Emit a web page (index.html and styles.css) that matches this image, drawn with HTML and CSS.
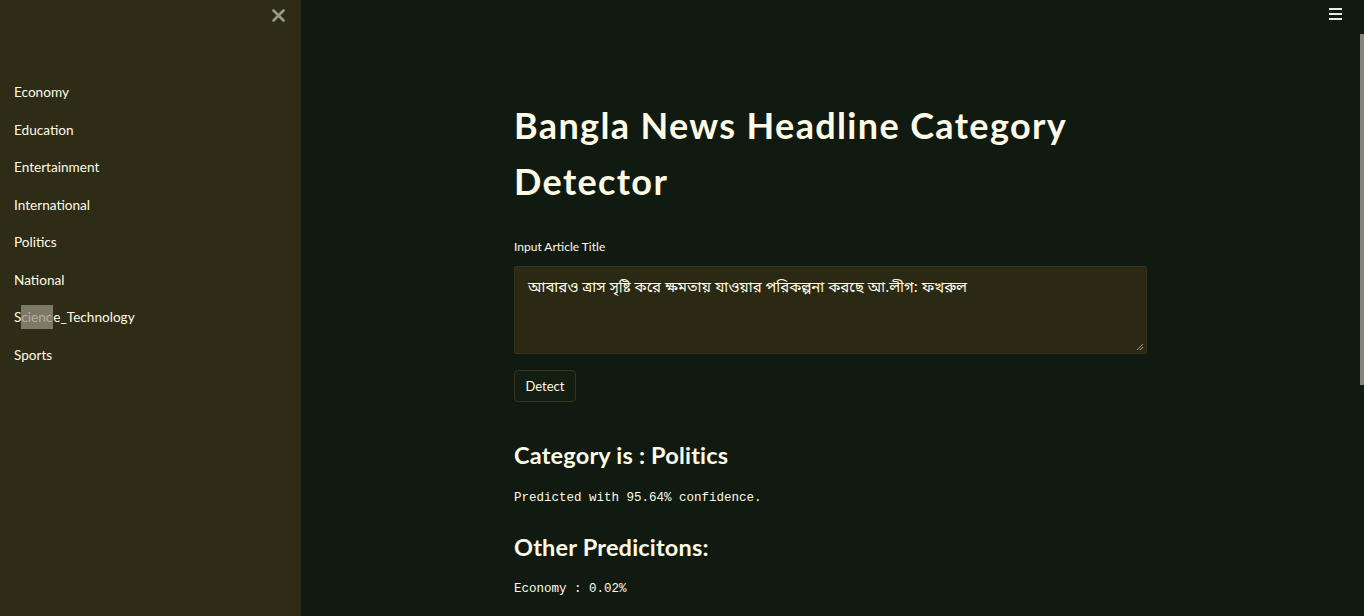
FILE: index.html
```html
<!DOCTYPE html>
<html lang="en">
<head>
<meta charset="utf-8">
<title>Bangla News Headline Category Detector</title>
<link rel="stylesheet" href="styles.css">
</head>
<body>
<div class="app">
  <aside class="sidebar">
    <div class="sidebar-top">
      <button class="close-btn" aria-label="Close sidebar">
        <svg width="13" height="13" viewBox="0 0 13 13"><path d="M1.5 1.5 L11.5 11.5 M11.5 1.5 L1.5 11.5" stroke="#9a988a" stroke-width="2.6" stroke-linecap="round"/></svg>
      </button>
    </div>
    <ul class="cat-list">
      <li>Economy</li>
      <li>Education</li>
      <li>Entertainment</li>
      <li>International</li>
      <li>Politics</li>
      <li>National</li>
      <li>S<span class="sel">cienc</span>e_Technology</li>
      <li>Sports</li>
    </ul>
  </aside>
  <main class="main">
    <button class="menu-btn" aria-label="Menu">
      <span></span><span></span><span></span>
    </button>
    <div class="scrollbar"></div>
    <div class="content">
      <h1 class="title">Bangla News Headline Category Detector</h1>
      <label class="field-label">Input Article Title</label>
      <div class="textarea">
        <span class="bn">আবারও ত্রাস সৃষ্টি করে ক্ষমতায় যাওয়ার পরিকল্পনা করছে আ.লীগ: ফখরুল</span>
        <svg class="grip" width="8" height="8" viewBox="0 0 8 8"><path d="M7 1 L1 7 M7 4 L4 7" stroke="#a09e90" stroke-width="1"/></svg>
      </div>
      <button class="detect">Detect</button>
      <h3 class="result">Category is : Politics</h3>
      <p class="mono conf">Predicted with 95.64% confidence.</p>
      <h3 class="result other">Other Predicitons:</h3>
      <p class="mono last">Economy : 0.02%</p>
    </div>
  </main>
</div>
</body>
</html>
```
FILE: styles.css
```css
* { box-sizing: border-box; }
html, body { margin: 0; padding: 0; }
body {
  width: 1364px;
  height: 616px;
  overflow: hidden;
  background: #111a10;
  color: #fdfbe6;
  font-family: Lato, "Noto Sans", sans-serif;
}
.app {
  display: flex;
  height: 616px;
}
.sidebar {
  width: 301px;
  flex: none;
  background: #2e2b17;
  display: flex;
  flex-direction: column;
}
.sidebar-top {
  display: flex;
  justify-content: flex-end;
  padding: 9px 16px 0 0;
  height: 82px;
}
.close-btn {
  background: none;
  border: 0;
  padding: 0;
  width: 13px;
  height: 13px;
  display: flex;
}
.cat-list {
  list-style: none;
  margin: 0;
  padding: 0 0 0 14px;
  display: flex;
  flex-direction: column;
  gap: 16.5px;
}
.cat-list li {
  font-size: 13.6px;
  line-height: 21px;
  height: 21px;
  color: #fdfbe6;
}
.sel {
  background: #7c7a66;
  color: #b0ae9c;
  padding: 4px 1px 4px 0;
}
.main {
  flex: 1;
  position: relative;
  display: flex;
  justify-content: center;
  padding-right: 4px;
}
.menu-btn {
  position: absolute;
  top: 8px;
  right: 22px;
  width: 13px;
  height: 12px;
  background: none;
  border: 0;
  padding: 0;
  display: flex;
  flex-direction: column;
  justify-content: space-between;
}
.menu-btn span {
  display: block;
  height: 2px;
  background: #ecebdc;
}
.scrollbar {
  position: absolute;
  right: 0;
  top: 34px;
  width: 4px;
  height: 351px;
  background: #86857a;
}
.content {
  width: 633px;
  display: flex;
  flex-direction: column;
  align-items: flex-start;
}
.title {
  margin: 97px 0 0 0;
  font-size: 36px;
  line-height: 56px;
  font-weight: 700;
  letter-spacing: 1.35px;
}
.field-label {
  margin-top: 30px;
  font-size: 12px;
  line-height: 16px;
}
.textarea {
  margin-top: 11px;
  width: 633px;
  height: 88px;
  background: #2b2914;
  border: 1px solid #34321c;
  border-radius: 2px;
  padding: 9px 13px;
  position: relative;
}
.bn {
  font-family: "Noto Sans Bengali", "Lohit Bengali", "Noto Sans", sans-serif;
  font-size: 15px;
  line-height: 22px;
}
.grip {
  position: absolute;
  right: 2px;
  bottom: 2px;
}
.detect {
  margin-top: 16px;
  height: 32px;
  width: 62px;
  background: #141d12;
  border: 1px solid #36351f;
  border-radius: 4px;
  color: #fdfbe6;
  font-family: Lato, "Noto Sans", sans-serif;
  font-size: 13px;
  padding: 0;
}
.result {
  margin: 38px 0 0 0;
  font-size: 23.5px;
  line-height: 30px;
  font-weight: 700;
  letter-spacing: 0.2px;
}
.other { margin-top: 25px; }
.mono {
  font-family: "Liberation Mono", "DejaVu Sans Mono", monospace;
  font-size: 12.5px;
  line-height: 18px;
  margin: 18px 0 0 0;
}
.conf { margin-top: 19px; }
.last { margin-top: 18px; }
```
